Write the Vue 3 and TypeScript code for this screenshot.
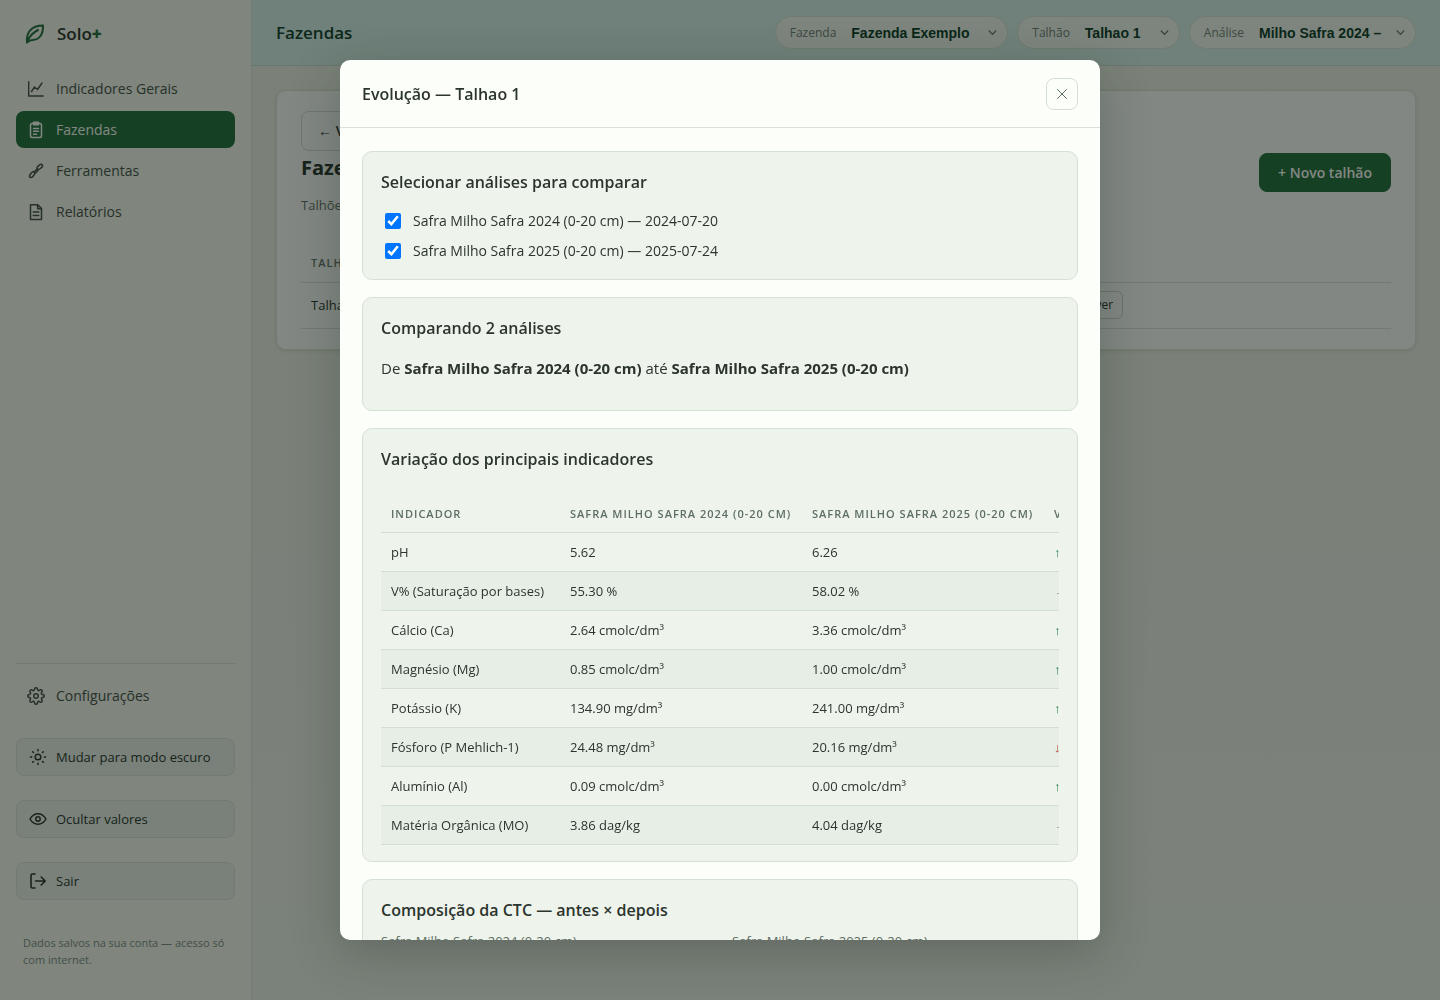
<script setup lang="ts">
import { ref } from 'vue'

interface Picker {
  id: string
  label: string
  value: string
  width: string
}

interface Analysis {
  id: number
  name: string
  date: string
  selected: boolean
}

interface Row {
  name: string
  before: string
  after: string
  trend: 'up' | 'down' | 'flat'
  change: string
}

const pickers: Picker[] = [
  { id: 'farm', label: 'Fazenda', value: 'Fazenda Exemplo', width: 'wide' },
  { id: 'plot', label: 'Talhão', value: 'Talhao 1', width: 'narrow' },
  { id: 'analysis', label: 'Análise', value: 'Milho Safra 2024 –', width: 'wide' },
]

const analyses = ref<Analysis[]>([
  { id: 1, name: 'Safra Milho Safra 2024 (0-20 cm)', date: '2024-07-20', selected: true },
  { id: 2, name: 'Safra Milho Safra 2025 (0-20 cm)', date: '2025-07-24', selected: true },
])

const rows: Row[] = [
  { name: 'pH', before: '5.62', after: '6.26', trend: 'up', change: '+0.64' },
  { name: 'V% (Saturação por bases)', before: '55.30 %', after: '58.02 %', trend: 'flat', change: '+2.72' },
  { name: 'Cálcio (Ca)', before: '2.64 cmolc/dm³', after: '3.36 cmolc/dm³', trend: 'up', change: '+0.72' },
  { name: 'Magnésio (Mg)', before: '0.85 cmolc/dm³', after: '1.00 cmolc/dm³', trend: 'up', change: '+0.15' },
  { name: 'Potássio (K)', before: '134.90 mg/dm³', after: '241.00 mg/dm³', trend: 'up', change: '+106.10' },
  { name: 'Fósforo (P Mehlich-1)', before: '24.48 mg/dm³', after: '20.16 mg/dm³', trend: 'down', change: '-4.32' },
  { name: 'Alumínio (Al)', before: '0.09 cmolc/dm³', after: '0.00 cmolc/dm³', trend: 'up', change: '-0.09' },
  { name: 'Matéria Orgânica (MO)', before: '3.86 dag/kg', after: '4.04 dag/kg', trend: 'flat', change: '+0.18' },
]

const arrows = { up: '↑', down: '↓', flat: '→' }
const open = ref(true)
</script>

<template>
  <div class="app">
    <aside class="sidebar">
      <div class="brand">
        <svg class="leaf" viewBox="0 0 20 20" fill="none" stroke="currentColor" stroke-width="2" stroke-linecap="round" stroke-linejoin="round">
          <path d="M2 18.500C1 9 6 1.500 18 1.500c.3 9.500-4 14.300-10.500 14.500C5 16 3.500 17 2 18.500zM2 18.500C4 12.500 8 8.500 13 6" />
        </svg>
        <span>Solo<b>+</b></span>
      </div>

      <nav class="nav" aria-label="Principal">
        <a href="#indicadores" class="nav-item">
          <svg viewBox="0 0 18 18" fill="none" stroke="currentColor" stroke-width="1.400" stroke-linecap="round" stroke-linejoin="round">
            <path d="M1.700 1.700V16h14.500M4.500 11.500L7.500 7l3 2.500L15 3" />
          </svg>
          Indicadores Gerais
        </a>
        <a href="#fazendas" class="nav-item active" aria-current="page">
          <svg viewBox="0 0 18 18" fill="none" stroke="currentColor" stroke-width="1.500" stroke-linecap="round" stroke-linejoin="round">
            <rect x="3.500" y="2.500" width="11" height="14" rx="1.500" />
            <path d="M6.500 2.500V1.200h5v2.600h-5zM6.500 7.500h5M6.500 10.300h5M6.500 13.200h3" />
          </svg>
          Fazendas
        </a>
        <a href="#ferramentas" class="nav-item">
          <svg viewBox="0 0 18 18" fill="none" stroke="currentColor" stroke-width="1.500" stroke-linecap="round" stroke-linejoin="round">
            <ellipse cx="5.200" cy="12.600" rx="3.500" ry="1.700" transform="rotate(-50 5.200 12.600)" />
            <ellipse cx="12.700" cy="4.900" rx="3.300" ry="1.700" transform="rotate(-38 12.700 4.900)" />
            <path d="M7 10l3.200-3M8.500 11l3-3.200" />
          </svg>
          Ferramentas
        </a>
        <a href="#relatorios" class="nav-item">
          <svg viewBox="0 0 18 18" fill="none" stroke="currentColor" stroke-width="1.500" stroke-linecap="round" stroke-linejoin="round">
            <path d="M3.500 1.700h7.300l3.700 3.800v11h-11zM10.600 1.900v3.800h3.700M6.200 9h5.600M6.200 12.500h5.600" />
          </svg>
          Relatórios
        </a>
      </nav>

      <div class="side-foot">
        <a href="#configuracoes" class="nav-item">
          <svg viewBox="0 0 24 24" fill="none" stroke="currentColor" stroke-width="2" stroke-linecap="round" stroke-linejoin="round">
            <circle cx="12" cy="12" r="3" />
            <path d="M19.400 15a1.650 1.650 0 0 0 .33 1.820l.06.06a2 2 0 1 1-2.830 2.830l-.06-.06a1.650 1.650 0 0 0-2.800 1.170V21a2 2 0 0 1-4 0v-.09A1.650 1.650 0 0 0 7.200 19.600l-.06.06a2 2 0 1 1-2.830-2.830l.06-.06A1.650 1.650 0 0 0 3.100 14H3a2 2 0 0 1 0-4h.09A1.650 1.650 0 0 0 4.400 7.200l-.06-.06a2 2 0 1 1 2.830-2.830l.06.06A1.650 1.650 0 0 0 10 3.100V3a2 2 0 0 1 4 0v.09a1.650 1.650 0 0 0 2.800 1.170l.06-.06a2 2 0 1 1 2.830 2.830l-.06.06A1.650 1.650 0 0 0 20.900 10H21a2 2 0 0 1 0 4h-.09a1.650 1.650 0 0 0-1.510 1z" />
          </svg>
          Configurações
        </a>
        <button type="button" class="side-btn">
          <svg viewBox="0 0 18 18" fill="none" stroke="currentColor" stroke-width="1.500" stroke-linecap="round">
            <circle cx="9" cy="9" r="2.800" />
            <path d="M9 1.500v1.200M9 15.300v1.200M1.500 9h1.200M15.300 9h1.200M3.700 3.700l.8.8M13.500 13.500l.8.8M3.700 14.300l.8-.8M13.500 4.500l.8-.8" />
          </svg>
          Mudar para modo escuro
        </button>
        <button type="button" class="side-btn">
          <svg viewBox="0 0 18 18" fill="none" stroke="currentColor" stroke-width="1.500" stroke-linecap="round" stroke-linejoin="round">
            <path d="M1 9c2-3.500 4.700-5.200 8-5.200s6 1.700 8 5.200c-2 3.500-4.700 5.200-8 5.200S3 12.500 1 9z" />
            <circle cx="9" cy="9" r="2.200" />
          </svg>
          Ocultar valores
        </button>
        <button type="button" class="side-btn">
          <svg viewBox="0 0 18 18" fill="none" stroke="currentColor" stroke-width="1.600" stroke-linecap="round" stroke-linejoin="round">
            <path d="M6 2H3.500Q2 2 2 3.500v11Q2 16 3.500 16H6M6.500 9h9.500M12.200 5l4 4-4 4" />
          </svg>
          Sair
        </button>
        <p class="note">Dados salvos na sua conta — acesso só com internet.</p>
      </div>
    </aside>

    <div class="page">
      <header class="topbar">
        <h1>Fazendas</h1>
        <div class="pickers">
          <div v-for="p in pickers" :key="p.id" class="picker">
            <label :for="p.id">{{ p.label }}</label>
            <select :id="p.id" :class="p.width">
              <option>{{ p.value }}</option>
            </select>
            <svg viewBox="0 0 9 9" fill="none" stroke="currentColor" stroke-width="1.200" stroke-linecap="round" stroke-linejoin="round" aria-hidden="true">
              <path d="M1.200 3l3.300 3.300L7.800 3" />
            </svg>
          </div>
        </div>
      </header>

      <main class="content">
        <section class="farm-card">
          <button type="button" class="back">← Voltar</button>
          <div class="farm-head">
            <div>
              <h2>Fazenda Exemplo</h2>
              <p>Talhões da fazenda</p>
            </div>
            <button type="button" class="primary">+ Novo talhão</button>
          </div>
          <table class="plots">
            <thead>
              <tr><th>Talhão</th><th></th></tr>
            </thead>
            <tbody>
              <tr>
                <td>Talhao 1</td>
                <td><button type="button" class="small">Remover</button></td>
              </tr>
            </tbody>
          </table>
        </section>
      </main>
    </div>

    <div v-if="open" class="overlay">
      <div class="modal" role="dialog" aria-modal="true" aria-labelledby="modal-title">
        <header class="modal-head">
          <h2 id="modal-title">Evolução — Talhao 1</h2>
          <button type="button" class="close" aria-label="Fechar" @click="open = false">
            <svg viewBox="0 0 12 12" fill="none" stroke="currentColor" stroke-width="1" stroke-linecap="round">
              <path d="M1.500 1.500l9 9M10.500 1.500l-9 9" />
            </svg>
          </button>
        </header>

        <div class="modal-body">
          <section class="panel">
            <h3>Selecionar análises para comparar</h3>
            <div class="checks">
              <label v-for="a in analyses" :key="a.id">
                <input v-model="a.selected" type="checkbox" />
                <span>{{ a.name }} — {{ a.date }}</span>
              </label>
            </div>
          </section>

          <section class="panel">
            <h3>Comparando 2 análises</h3>
            <p class="summary">
              De <strong>{{ analyses[0].name }}</strong> até <strong>{{ analyses[1].name }}</strong>
            </p>
          </section>

          <section class="panel">
            <h3>Variação dos principais indicadores</h3>
            <div class="table-scroll">
              <table class="data">
                <colgroup>
                  <col class="c-name" />
                  <col class="c-value" />
                  <col class="c-value" />
                  <col />
                </colgroup>
                <thead>
                  <tr>
                    <th>Indicador</th>
                    <th v-for="a in analyses" :key="a.id">{{ a.name }}</th>
                    <th>Variação</th>
                  </tr>
                </thead>
                <tbody>
                  <tr v-for="r in rows" :key="r.name">
                    <td>{{ r.name }}</td>
                    <td>{{ r.before }}</td>
                    <td>{{ r.after }}</td>
                    <td :class="r.trend">{{ arrows[r.trend] }} {{ r.change }}</td>
                  </tr>
                </tbody>
              </table>
            </div>
          </section>

          <section class="panel">
            <h3>Composição da CTC — antes × depois</h3>
            <div class="compare">
              <p v-for="a in analyses" :key="a.id">{{ a.name }}</p>
            </div>
          </section>
        </div>
      </div>
    </div>
  </div>
</template>

<style>
body {
  margin: 0;
  background: #f0f4ee;
}
</style>

<style scoped>
* {
  box-sizing: border-box;
}

.app {
  display: flex;
  min-height: 100vh;
  font-family: "Segoe UI", "Open Sans", "Noto Sans", sans-serif;
  font-size: 14px;
  line-height: 20px;
  color: #2b352e;
  background: linear-gradient(#f0f2e8, #f0f4ee);
}

h1, h2, h3, p {
  margin: 0;
}

button {
  font: inherit;
  color: inherit;
  cursor: pointer;
}

/* Sidebar */
.sidebar {
  display: flex;
  flex: none;
  flex-direction: column;
  width: 252px;
  padding: 20px 16px 32px;
  border-right: 1px solid #e2e9e0;
  background: #fafaf4;
}

.brand {
  display: flex;
  align-items: center;
  gap: 12px;
  height: 28px;
  padding-left: 9px;
  margin-bottom: 22px;
  font-size: 17px;
  font-weight: 600;
}

.brand b {
  color: #24703f;
}

.leaf {
  width: 20px;
  height: 20px;
  color: #24703f;
}

.nav {
  display: flex;
  flex-direction: column;
  gap: 4px;
}

.nav-item {
  display: flex;
  align-items: center;
  gap: 11px;
  height: 37px;
  padding: 0 11px;
  border-radius: 8px;
  color: #47534b;
  text-decoration: none;
}

.nav-item svg,
.side-btn svg {
  flex: none;
  width: 18px;
  height: 18px;
}

.nav-item.active {
  color: #fff;
  background: #24703f;
}

.side-foot {
  display: flex;
  flex-direction: column;
  gap: 24px;
  padding-top: 13px;
  margin-top: auto;
  border-top: 1px solid #dce5da;
}

.side-btn {
  display: flex;
  align-items: center;
  gap: 9px;
  height: 38px;
  padding: 0 12px;
  border: 1px solid #dfe7dd;
  border-radius: 8px;
  font-size: 13px;
  text-align: left;
  background: #edf3ec;
}

.note {
  padding: 10px 7px 0;
  font-size: 11px;
  line-height: 17px;
  color: #819087;
}

/* Page behind the dialog */
.page {
  flex: 1;
  min-width: 0;
}

.topbar {
  display: flex;
  align-items: center;
  justify-content: space-between;
  height: 66px;
  padding: 0 24px;
  border-bottom: 1px solid #cbe0d8;
  background: #dbf2ee;
}

.topbar h1 {
  font-size: 17px;
  font-weight: 600;
  color: #12402f;
}

.pickers {
  display: flex;
  gap: 9px;
}

.picker {
  display: flex;
  align-items: center;
  height: 33px;
  padding: 0 10px 0 14px;
  border: 1px solid #dae5d8;
  border-radius: 17px;
  color: #60756b;
  background: #f7faf4;
}

.picker label {
  margin-right: 15px;
  font-size: 12px;
  color: #71857b;
}

.picker select {
  padding: 0;
  border: 0;
  appearance: none;
  font: bold 14px "Liberation Sans", Arial, sans-serif;
  color: #0f3e2c;
  background: transparent;
}

.picker .wide {
  width: 137px;
}

.picker .narrow {
  width: 75px;
}

.picker svg {
  width: 9px;
  height: 9px;
}

.content {
  padding: 24px;
}

.farm-card {
  padding: 20px 24px;
  border: 1px solid #e0e7de;
  border-radius: 10px;
  background: #fff;
  box-shadow: 0 1px 4px rgba(20, 50, 30, 0.12);
}

.back,
.primary {
  height: 40px;
  padding: 0 16px;
  border: 1px solid #d6e0d4;
  border-radius: 8px;
  font-size: 14px;
  font-weight: 600;
  background: transparent;
}

.farm-head {
  display: flex;
  align-items: flex-start;
  justify-content: space-between;
  padding-top: 2px;
}

.farm-head h2 {
  font-size: 20px;
  font-weight: 700;
  line-height: 30px;
}

.farm-head p {
  margin-top: 12px;
  font-size: 13px;
  color: #66756b;
}

.farm-head .primary {
  width: 132px;
  height: 39px;
  padding: 0;
  border-color: #24703f;
  color: #fff;
  background: #24703f;
}

.plots {
  width: 100%;
  margin-top: 30px;
  border-collapse: collapse;
  text-align: left;
}

.plots th,
.plots td {
  height: 37px;
  padding: 0 10px;
  border-bottom: 1px solid #dce5da;
}

.plots th {
  width: 60%;
  font-size: 11px;
  font-weight: 600;
  letter-spacing: 1px;
  text-transform: uppercase;
  color: #68776d;
}

.plots td {
  height: 46px;
  font-size: 13px;
}

.plots td:last-child {
  padding-left: 98px;
}

.small {
  height: 28px;
  padding: 0 9px;
  border: 1px solid #cfdacd;
  border-radius: 6px;
  font-size: 12px;
  background: transparent;
}

/* Dialog */
.overlay {
  position: fixed;
  inset: 0;
  display: flex;
  align-items: center;
  justify-content: center;
  padding: 60px 20px;
  background: rgba(5, 15, 7, 0.5);
}

.modal {
  display: flex;
  flex-direction: column;
  width: 100%;
  max-width: 760px;
  max-height: 100%;
  border-radius: 10px;
  overflow: hidden;
  background: #fcfef9;
  box-shadow: 0 12px 48px rgba(20, 30, 20, 0.25);
}

.modal-head {
  display: flex;
  flex: none;
  align-items: center;
  justify-content: space-between;
  height: 68px;
  padding: 0 22px;
  border-bottom: 1px solid #d8e1d7;
}

.modal-head h2 {
  font-size: 16px;
  font-weight: 600;
}

.close {
  display: grid;
  place-items: center;
  width: 32px;
  height: 32px;
  padding: 0;
  border: 1px solid #d3e0d3;
  border-radius: 8px;
  color: #5c6c62;
  background: transparent;
}

.close svg {
  width: 12px;
  height: 12px;
}

.modal-body {
  display: flex;
  flex-direction: column;
  gap: 17px;
  padding: 23px 22px;
  overflow-y: auto;
  scrollbar-width: none;
}

.panel {
  flex: none;
  padding: 17px 18px 16px;
  border: 1px solid #d4e1d3;
  border-radius: 10px;
  background: #eef3ec;
}

.panel h3 {
  font-size: 16px;
  font-weight: 600;
  line-height: 26px;
}

.checks {
  display: flex;
  flex-direction: column;
  gap: 10px;
  padding-bottom: 2px;
  margin-top: 16px;
}

.checks label {
  display: flex;
  align-items: center;
}

.checks input {
  width: 16px;
  height: 16px;
  margin: 0 12px 0 4px;
}

.summary {
  margin: 17px 0 16px;
  font-size: 15px;
}

.table-scroll {
  margin-top: 24px;
  overflow-x: auto;
  scrollbar-width: none;
}

.data {
  width: 780px;
  border-collapse: collapse;
  table-layout: fixed;
  font-size: 13px;
  text-align: left;
  white-space: nowrap;
}

.c-name {
  width: 179px;
}

.c-value {
  width: 242px;
}

.data th,
.data td {
  height: 39px;
  padding: 0 10px;
  border-bottom: 1px solid #d4dfd3;
}

.data th {
  height: 36px;
  font-size: 11px;
  font-weight: 600;
  letter-spacing: 1px;
  text-transform: uppercase;
  color: #5d6f65;
}

.data tbody tr:nth-child(even) {
  background: #e7eee6;
}

.data .up {
  font-weight: 600;
  color: #1f7a45;
}

.data .down {
  font-weight: 600;
  color: #b5452c;
}

.data .flat {
  color: #66766b;
}

.compare {
  display: grid;
  grid-template-columns: 1fr 1fr;
  gap: 24px;
  padding-bottom: 40px;
  margin-top: 8px;
  font-size: 13px;
  color: #5d6f65;
}
</style>
